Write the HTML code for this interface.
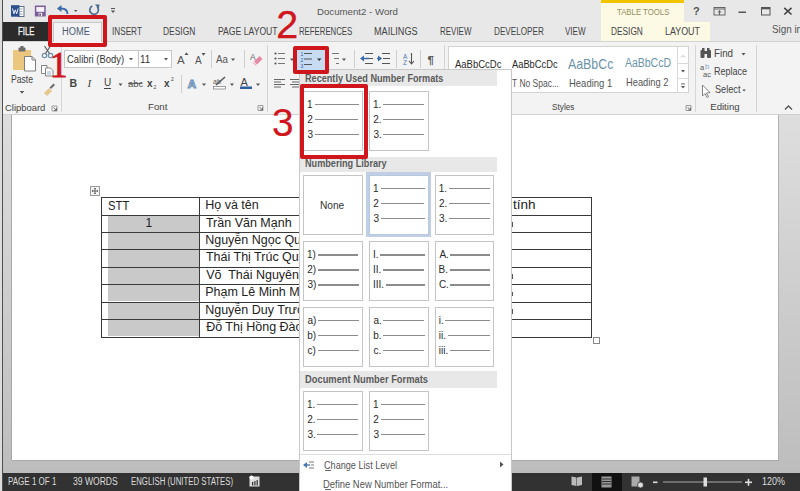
<!DOCTYPE html><html><head><meta charset="utf-8"><style>
html,body{margin:0;padding:0;width:800px;height:491px;overflow:hidden;background:#e8e8e8}
body{position:relative}
div,span,svg{position:absolute}
span{white-space:pre;line-height:normal}
</style></head><body>
<div style="left:0px;top:0px;width:800px;height:22px;background:#e8e8e8;"></div>
<div style="left:0px;top:22px;width:800px;height:19px;background:#e8e8e8;"></div>
<div style="left:0px;top:41px;width:800px;height:1px;background:#d2d2d2;"></div>
<div style="left:0px;top:42px;width:800px;height:73px;background:#f3f3f3;"></div>
<div style="left:0px;top:114px;width:800px;height:1px;background:#d0d0d0;"></div>
<div style="left:0px;top:115px;width:800px;height:358px;background:linear-gradient(#dedede,#bdbdbd);"></div>
<div style="left:11px;top:115px;width:1px;height:345px;background:#a8a8a8;"></div>
<div style="left:12px;top:115px;width:766px;height:344.5px;background:#ffffff;"></div>
<div style="left:778px;top:115px;width:1px;height:345px;background:#b0b0b0;"></div>
<div style="left:12px;top:459.5px;width:767px;height:1px;background:#aaaaaa;"></div>
<div style="left:0px;top:473px;width:800px;height:18px;background:#323232;"></div>
<div style="left:0px;top:0px;width:2px;height:491px;background:#dcdcdc;"></div>
<div style="left:1.6px;top:0px;width:1.7px;height:491px;background:#505050;"></div>
<div style="left:601px;top:0px;width:83px;height:22px;background:#fcf9e4;"></div>
<div style="left:601px;top:0px;width:83px;height:3px;background:#f2c400;"></div>
<div style="left:601px;top:22px;width:109px;height:19px;background:#fcf9e4;"></div>
<span style="left:616.54px;top:6.46px;font-size:9.5px;font-family:'Liberation Sans',sans-serif;color:#948c62;transform:scaleX(0.8190);transform-origin:0 0;">TABLE TOOLS</span>
<span style="left:610.84px;top:26.10px;font-size:10px;font-family:'Liberation Sans',sans-serif;color:#444;transform:scaleX(0.8311);transform-origin:0 0;">DESIGN</span>
<span style="left:665.29px;top:26.10px;font-size:10px;font-family:'Liberation Sans',sans-serif;color:#444;transform:scaleX(0.8889);transform-origin:0 0;">LAYOUT</span>
<div style="left:3px;top:22px;width:45px;height:19px;background:#2b2b2b;"></div>
<span style="left:17.88px;top:26.00px;font-size:10px;font-family:'Liberation Sans',sans-serif;color:#f4f4f4;transform:scaleX(0.7789);transform-origin:0 0;-webkit-text-stroke:0.3px #f4f4f4;">FILE</span>
<div style="left:53px;top:22px;width:49px;height:20px;background:#c8c8c8;"></div>
<div style="left:54px;top:23px;width:47px;height:19px;background:#f3f3f3;"></div>
<span style="left:62.26px;top:26.10px;font-size:10px;font-family:'Liberation Sans',sans-serif;color:#4b5b73;transform:scaleX(0.9271);transform-origin:0 0;">HOME</span>
<span style="left:112.26px;top:26.10px;font-size:10px;font-family:'Liberation Sans',sans-serif;color:#444;transform:scaleX(0.8192);transform-origin:0 0;">INSERT</span>
<span style="left:163.32px;top:26.10px;font-size:10px;font-family:'Liberation Sans',sans-serif;color:#444;transform:scaleX(0.8447);transform-origin:0 0;">DESIGN</span>
<span style="left:218.06px;top:26.10px;font-size:10px;font-family:'Liberation Sans',sans-serif;color:#444;transform:scaleX(0.8627);transform-origin:0 0;">PAGE LAYOUT</span>
<span style="left:298.88px;top:26.10px;font-size:10px;font-family:'Liberation Sans',sans-serif;color:#444;transform:scaleX(0.7787);transform-origin:0 0;">REFERENCES</span>
<span style="left:374.27px;top:26.10px;font-size:10px;font-family:'Liberation Sans',sans-serif;color:#444;transform:scaleX(0.9118);transform-origin:0 0;">MAILINGS</span>
<span style="left:439.76px;top:26.10px;font-size:10px;font-family:'Liberation Sans',sans-serif;color:#444;transform:scaleX(0.7979);transform-origin:0 0;">REVIEW</span>
<span style="left:493.55px;top:26.10px;font-size:10px;font-family:'Liberation Sans',sans-serif;color:#444;transform:scaleX(0.8154);transform-origin:0 0;">DEVELOPER</span>
<span style="left:565.46px;top:26.10px;font-size:10px;font-family:'Liberation Sans',sans-serif;color:#444;transform:scaleX(0.8055);transform-origin:0 0;">VIEW</span>
<span style="left:317.21px;top:5.98px;font-size:9.8px;font-family:'Liberation Sans',sans-serif;color:#555;transform:scaleX(0.9857);transform-origin:0 0;">Document2 - Word</span>
<span style="left:771.57px;top:23.72px;font-size:10.3px;font-family:'Liberation Sans',sans-serif;color:#555;transform:scaleX(0.9555);transform-origin:0 0;">Sign in</span>
<svg style="left:0;top:0" width="130" height="22" viewBox="0 0 130 22">
<rect x="18.5" y="6.5" width="5.5" height="10" fill="#fff" stroke="#5f6f86" stroke-width="1"/>
<line x1="19.5" y1="9" x2="22.5" y2="9" stroke="#7d8ca2" stroke-width="0.8"/>
<line x1="19.5" y1="11.5" x2="22.5" y2="11.5" stroke="#7d8ca2" stroke-width="0.8"/>
<line x1="19.5" y1="14" x2="22.5" y2="14" stroke="#7d8ca2" stroke-width="0.8"/>
<rect x="11" y="5.2" width="8.5" height="11.5" fill="#2b4f8c"/>
<path d="M12.5 8.5 L13.9 13.8 L15.3 9.8 L16.7 13.8 L18.1 8.5" fill="none" stroke="#e8eef8" stroke-width="1"/>
<rect x="35.6" y="6.3" width="9.4" height="9.4" fill="#f6f2f8" stroke="#7b5c98" stroke-width="1.5"/>
<rect x="35.6" y="11.8" width="9.4" height="4" fill="#7b5c98"/>
<rect x="38.6" y="12.8" width="3.6" height="3" fill="#f6f2f8"/>
<rect x="39.4" y="13.6" width="1.4" height="2" fill="#333"/>
<path d="M67.5 14 C67.5 9.5 65 8.5 61 8.5 L58.5 8.5" fill="none" stroke="#3d6aa8" stroke-width="1.8"/>
<path d="M57 8.5 L61.5 5 L61.5 12 Z" fill="#3d6aa8"/>
<path d="M74 10 L77.5 10 L75.75 12 Z" fill="#555"/>
<path d="M97.2 7 A4.3 4.3 0 1 1 92.3 6.1" fill="none" stroke="#4a6a90" stroke-width="1.7"/>
<path d="M95 4.5 L99.5 4.5 L98.8 9 Z" fill="#4a6a90"/>
<rect x="111" y="8" width="4" height="1" fill="#555"/>
<path d="M110.8 10.5 L115.2 10.5 L113 13 Z" fill="#555"/>
</svg>
<svg style="left:680px;top:0" width="120" height="22" viewBox="680 0 120 22">
<text x="693" y="15" font-family="Liberation Sans" font-weight="bold" font-size="11" fill="#555">?</text>
<rect x="714" y="7.5" width="11" height="7.5" fill="none" stroke="#666" stroke-width="1"/>
<line x1="714" y1="9" x2="725" y2="9" stroke="#666" stroke-width="1"/>
<path d="M719.5 10 L717.5 12.5 L721.5 12.5 Z" fill="#666"/>
<line x1="719.5" y1="12" x2="719.5" y2="15" stroke="#666" stroke-width="1"/>
<rect x="738.5" y="11.5" width="7.5" height="1.5" fill="#555"/>
<rect x="761.5" y="7.5" width="8.5" height="7.5" fill="none" stroke="#555" stroke-width="1"/>
<rect x="761.5" y="7.5" width="8.5" height="1.8" fill="#555"/>
<path d="M784.3 7.8 L791.5 14.5 M791.5 7.8 L784.3 14.5" stroke="#444" stroke-width="1.6"/>
</svg>
<div style="left:61px;top:45px;width:1px;height:67px;background:#d6d6d6;"></div>
<div style="left:267px;top:45px;width:1px;height:67px;background:#d6d6d6;"></div>
<div style="left:444.4px;top:45px;width:1px;height:67px;background:#d6d6d6;"></div>
<div style="left:694.8px;top:45px;width:1px;height:67px;background:#d6d6d6;"></div>
<div style="left:756.3px;top:45px;width:1px;height:67px;background:#d6d6d6;"></div>
<div style="left:210.6px;top:50px;width:1px;height:18px;background:#cfcfcf;"></div>
<div style="left:243.5px;top:50px;width:1px;height:18px;background:#cfcfcf;"></div>
<div style="left:181px;top:75px;width:1px;height:18px;background:#cfcfcf;"></div>
<div style="left:353.5px;top:50px;width:1px;height:18px;background:#cfcfcf;"></div>
<div style="left:395.5px;top:50px;width:1px;height:18px;background:#cfcfcf;"></div>
<div style="left:420.4px;top:50px;width:1px;height:18px;background:#cfcfcf;"></div>
<span style="left:5.36px;top:101.77px;font-size:9.6px;font-family:'Liberation Sans',sans-serif;color:#444;transform:scaleX(0.9813);transform-origin:0 0;">Clipboard</span>
<span style="left:147.64px;top:101.37px;font-size:9.6px;font-family:'Liberation Sans',sans-serif;color:#444;transform:scaleX(1.0109);transform-origin:0 0;">Font</span>
<span style="left:11.30px;top:73.04px;font-size:10.5px;font-family:'Liberation Sans',sans-serif;color:#444;transform:scaleX(0.8219);transform-origin:0 0;">Paste</span>
<span style="left:551.91px;top:101.37px;font-size:9.6px;font-family:'Liberation Sans',sans-serif;color:#444;transform:scaleX(0.8600);transform-origin:0 0;">Styles</span>
<span style="left:710.25px;top:101.37px;font-size:9.6px;font-family:'Liberation Sans',sans-serif;color:#444;">Editing</span>
<span style="left:714.41px;top:46.54px;font-size:10.5px;font-family:'Liberation Sans',sans-serif;color:#444;transform:scaleX(0.9312);transform-origin:0 0;">Find</span>
<span style="left:714.47px;top:64.94px;font-size:10.5px;font-family:'Liberation Sans',sans-serif;color:#444;transform:scaleX(0.8591);transform-origin:0 0;">Replace</span>
<span style="left:714.81px;top:83.14px;font-size:10.5px;font-family:'Liberation Sans',sans-serif;color:#444;transform:scaleX(0.8726);transform-origin:0 0;">Select</span>
<div style="left:64px;top:50px;width:75px;height:18px;box-sizing:border-box;border:1px solid #c6c6c6;background:#fff;"></div>
<div style="left:138px;top:50px;width:34px;height:18px;box-sizing:border-box;border:1px solid #c6c6c6;background:#fff;"></div>
<span style="left:66.55px;top:52.54px;font-size:10.5px;font-family:'Liberation Sans',sans-serif;color:#333;transform:scaleX(0.8967);transform-origin:0 0;">Calibri (Body)</span>
<span style="left:140.25px;top:52.54px;font-size:10.5px;font-family:'Liberation Sans',sans-serif;color:#333;transform:scaleX(0.9375);transform-origin:0 0;">11</span>
<svg style="left:0;top:42px" width="800" height="72" viewBox="0 42 800 72">
<!-- paste -->
<rect x="13" y="50" width="18" height="20" rx="1" fill="#ebc67e"/>
<rect x="18.5" y="47.5" width="7" height="4" rx="1" fill="#6d6d6d"/>
<rect x="20.5" y="46" width="3" height="2" fill="#6d6d6d"/>
<path d="M24.5 56.5 L32 56.5 L35.5 60 L35.5 71 L24.5 71 Z" fill="#fff" stroke="#7d7d7d" stroke-width="1"/>
<path d="M32 56.5 L32 60 L35.5 60" fill="none" stroke="#7d7d7d" stroke-width="1"/>
<path d="M20 91 L24 91 L22 93.5 Z" fill="#555"/>
<!-- scissors -->
<circle cx="44.5" cy="55.5" r="2.2" fill="none" stroke="#6f8fb0" stroke-width="1.2"/>
<circle cx="50.5" cy="55.5" r="2.2" fill="none" stroke="#6f8fb0" stroke-width="1.2"/>
<path d="M45.5 53.5 L50.5 46 M49.5 53.5 L44.5 46" stroke="#555" stroke-width="1.1"/>
<!-- copy -->
<path d="M41.5 65.5 L47 65.5 L47 73.5 L41.5 73.5 Z" fill="#fff" stroke="#777" stroke-width="0.9"/>
<path d="M45.5 68 L50.5 68 L53 70.5 L53 76 L45.5 76 Z" fill="#fff" stroke="#777" stroke-width="0.9"/>
<path d="M47 72 L51 72 M47 74 L51 74" stroke="#7aa0c0" stroke-width="0.8"/>
<!-- format painter -->
<path d="M44 93 L49 88 L52 91 L47 96 Z" fill="#e3c88f"/>
<path d="M49.5 87.5 L53.5 83.5 L55 85 L51 89 Z" fill="#6d6d6d"/>
<path d="M20 91 L24 91 L22 93.5 Z" fill="#555"/>
<!-- launchers -->
<path d="M52 106 L57 106 L57 111 L52 111 Z" fill="none" stroke="#888" stroke-width="0.8"/>
<path d="M53.5 107.5 L56.5 110.5 M56.5 108 L56.5 110.5 L54 110.5" fill="none" stroke="#666" stroke-width="0.9"/>
<path d="M258 105.5 L263 105.5 L263 110.5 L258 110.5 Z" fill="none" stroke="#888" stroke-width="0.8"/>
<path d="M259.5 107 L262.5 110 M262.5 107.5 L262.5 110 L260 110" fill="none" stroke="#666" stroke-width="0.9"/>
<path d="M686 105.5 L691 105.5 L691 110.5 L686 110.5 Z" fill="none" stroke="#888" stroke-width="0.8"/>
<path d="M687.5 107 L690.5 110 M690.5 107.5 L690.5 110 L688 110" fill="none" stroke="#666" stroke-width="0.9"/>
<!-- font dropdowns -->
<path d="M129 58 L133 58 L131 60.5 Z" fill="#555"/>
<path d="M164 58 L168 58 L166 60.5 Z" fill="#555"/>
<!-- grow/shrink -->
<text x="177" y="63.5" font-family="Liberation Sans" font-size="11.5" fill="#555">A</text>
<path d="M184.5 55 L188.5 55 L186.5 52.3 Z" fill="#555"/>
<text x="195" y="64" font-family="Liberation Sans" font-size="10" fill="#555">A</text>
<path d="M201.5 53 L205.5 53 L203.5 55.7 Z" fill="#555"/>
<text x="216" y="63" font-family="Liberation Sans" font-size="11" fill="#555" textLength="12" lengthAdjust="spacingAndGlyphs">Aa</text>
<path d="M231 58.5 L235 58.5 L233 61 Z" fill="#555"/>
<!-- clear formatting -->
<text x="250" y="60" font-family="Liberation Sans" font-size="8.5" fill="#666">A</text>
<path d="M254 61.5 L259.5 56 L262.5 59 L257 64.5 Z" fill="#e58aa5"/>
<path d="M253 62.5 L256 65.5" stroke="#e58aa5" stroke-width="1"/>
<!-- row2 font -->
<text x="69.5" y="87" font-family="Liberation Sans" font-weight="bold" font-size="10.5" fill="#444">B</text>
<text x="87.5" y="87" font-family="Liberation Serif" font-style="italic" font-size="11" fill="#444">I</text>
<text x="104" y="86" font-family="Liberation Sans" font-size="10" fill="#444">U</text>
<rect x="104" y="88" width="7" height="1" fill="#444"/>
<path d="M118.5 83.5 L122.5 83.5 L120.5 86 Z" fill="#555"/>
<text x="128" y="87" font-family="Liberation Sans" font-size="9.5" fill="#555">abc</text>
<rect x="128" y="83" width="14" height="0.9" fill="#555"/>
<text x="147" y="87" font-family="Liberation Sans" font-weight="bold" font-size="10" fill="#444">x</text>
<text x="153.5" y="89" font-family="Liberation Sans" font-size="5" fill="#444">2</text>
<text x="164" y="87" font-family="Liberation Sans" font-weight="bold" font-size="10" fill="#444">x</text>
<text x="171" y="81" font-family="Liberation Sans" font-size="5" fill="#444">2</text>
<text x="187.8" y="87.5" font-family="Liberation Sans" font-weight="bold" font-size="11.5" fill="#f4f8fc" stroke="#6b90b8" stroke-width="1.1">A</text>
<path d="M202 83.5 L206 83.5 L204 86 Z" fill="#555"/>
<text x="213" y="84" font-family="Liberation Sans" font-size="7" fill="#555">ab</text>
<path d="M216 85 L225 77" stroke="#555" stroke-width="1.5"/>
<rect x="213.5" y="86.5" width="12" height="2.5" fill="#fff" stroke="#888" stroke-width="0.8"/>
<path d="M230 83.5 L234 83.5 L232 86 Z" fill="#555"/>
<text x="240.5" y="86" font-family="Liberation Sans" font-size="11" fill="#444">A</text>
<rect x="240" y="86.5" width="12" height="2.5" fill="#2e5f9e"/>
<path d="M256 83.5 L260 83.5 L258 86 Z" fill="#555"/>
<!-- paragraph row1 -->
<g fill="#555">
<circle cx="275.5" cy="53.5" r="1.1"/><circle cx="275.5" cy="58.5" r="1.1"/><circle cx="275.5" cy="63.5" r="1.1"/>
</g>
<g stroke="#777" stroke-width="1">
<line x1="278" y1="53.5" x2="285" y2="53.5"/><line x1="278" y1="58.5" x2="285" y2="58.5"/><line x1="278" y1="63.5" x2="285" y2="63.5"/>
</g>
<path d="M290 58.5 L294 58.5 L292 61 Z" fill="#555"/>
<!-- multilevel -->
<g stroke="#777" stroke-width="1">
<line x1="332" y1="53.5" x2="339" y2="53.5"/><line x1="334" y1="58.5" x2="339" y2="58.5"/><line x1="336" y1="63.5" x2="339" y2="63.5"/>
</g>
<path d="M342 58.5 L346 58.5 L344 61 Z" fill="#555"/>
<!-- indents -->
<g stroke="#555" stroke-width="1">
<line x1="365" y1="53.5" x2="373" y2="53.5"/><line x1="366" y1="58.5" x2="373" y2="58.5"/><line x1="365" y1="63.5" x2="373" y2="63.5"/>
<line x1="382" y1="53.5" x2="390" y2="53.5"/><line x1="383" y1="58.5" x2="390" y2="58.5"/><line x1="382" y1="63.5" x2="390" y2="63.5"/>
</g>
<path d="M360 58.5 L364 55.5 L364 61.5 Z" fill="#3d6aa8"/><line x1="363" y1="58.5" x2="369" y2="58.5" stroke="#3d6aa8" stroke-width="1.5"/>
<path d="M382 58.5 L378 55.5 L378 61.5 Z" fill="#3d6aa8"/><line x1="377" y1="58.5" x2="381" y2="58.5" stroke="#3d6aa8" stroke-width="1.5"/>
<!-- sort -->
<text x="403" y="59" font-family="Liberation Sans" font-size="6.5" fill="#4d7ab0">A</text>
<text x="403" y="65" font-family="Liberation Sans" font-size="6.5" fill="#4d7ab0">Z</text>
<path d="M411.5 53 L411.5 64 M409 61 L411.5 64 L414 61" fill="none" stroke="#555" stroke-width="1.1"/>
<!-- pilcrow -->
<text x="427.5" y="64" font-family="Liberation Sans" font-weight="bold" font-size="11.5" fill="#555">&#182;</text>
<!-- align row2 -->
<g stroke="#666" stroke-width="1">
<line x1="274" y1="79.5" x2="285" y2="79.5"/><line x1="274" y1="82" x2="281" y2="82"/><line x1="274" y1="84.5" x2="285" y2="84.5"/><line x1="274" y1="87" x2="281" y2="87"/>
<line x1="290" y1="79.5" x2="299" y2="79.5"/><line x1="292" y1="82" x2="299" y2="82"/><line x1="290" y1="84.5" x2="299" y2="84.5"/><line x1="292" y1="87" x2="299" y2="87"/>
</g>
<!-- editing icons -->
<g fill="#555">
<rect x="700.5" y="50" width="4" height="8" rx="1"/><rect x="707" y="50" width="4" height="8" rx="1"/>
<rect x="702" y="48" width="2.5" height="3"/><rect x="707" y="48" width="2.5" height="3"/><rect x="703.5" y="51" width="4" height="3"/>
</g>
<path d="M741.5 53 L745.5 53 L743.5 55.5 Z" fill="#555"/>
<text x="700" y="70" font-family="Liberation Sans" font-size="7.5" fill="#555">a</text>
<text x="705" y="69" font-family="Liberation Sans" font-size="7.5" fill="#8aa8c8">b</text>
<text x="703" y="76.5" font-family="Liberation Sans" font-size="7.5" fill="#555">ac</text>
<path d="M702.5 85 L702.5 96 L705 93.5 L707 97.5 L708.5 96.8 L706.5 93 L710 92.5 Z" fill="#fff" stroke="#777" stroke-width="0.9"/>
<path d="M742.3 89.5 L745.8 89.5 L744.05 91.5 Z" fill="#555"/>
<path d="M785 109.5 L788.5 106 L792 109.5" fill="none" stroke="#555" stroke-width="1.4"/>
</svg>
<div style="left:448px;top:46px;width:241px;height:47px;box-sizing:border-box;border:1px solid #d2d2d2;background:#fff;"></div>
<div style="left:677px;top:46px;width:1px;height:47px;background:#d9d9d9;"></div>
<div style="left:677px;top:62.5px;width:12px;height:1px;background:#d9d9d9;"></div>
<div style="left:677px;top:78px;width:12px;height:1px;background:#d9d9d9;"></div>
<svg style="left:677px;top:46px" width="12" height="47" viewBox="677 46 12 47">
<path d="M681 57.5 L683 55.5 L685 57.5" fill="none" stroke="#bbb" stroke-width="1"/>
<path d="M681 70 L685 70 L683 72.5 Z" fill="#555"/>
<rect x="681" y="83.5" width="4" height="0.9" fill="#555"/>
<path d="M681 86 L685 86 L683 88.5 Z" fill="#555"/>
</svg>
<span style="left:454.60px;top:57.88px;font-size:11px;font-family:'Liberation Sans',sans-serif;color:#2a2a2a;transform:scaleX(0.8636);transform-origin:0 0;">AaBbCcDc</span>
<span style="left:511.70px;top:57.88px;font-size:11px;font-family:'Liberation Sans',sans-serif;color:#2a2a2a;transform:scaleX(0.8467);transform-origin:0 0;">AaBbCcDc</span>
<span style="left:567.96px;top:55.40px;font-size:15px;font-family:'Liberation Sans',sans-serif;color:#6a94aa;transform:scaleX(0.8242);transform-origin:0 0;">AaBbCc</span>
<span style="left:624.50px;top:56.30px;font-size:12.5px;font-family:'Liberation Sans',sans-serif;color:#6a94aa;transform:scaleX(0.8379);transform-origin:0 0;">AaBbCcD</span>
<span style="left:511.84px;top:76.54px;font-size:10.5px;font-family:'Liberation Sans',sans-serif;color:#555;transform:scaleX(0.8070);transform-origin:0 0;">T No Spac...</span>
<span style="left:569.23px;top:76.54px;font-size:10.5px;font-family:'Liberation Sans',sans-serif;color:#555;transform:scaleX(0.9023);transform-origin:0 0;">Heading 1</span>
<span style="left:625.95px;top:76.34px;font-size:10.5px;font-family:'Liberation Sans',sans-serif;color:#555;transform:scaleX(0.8882);transform-origin:0 0;">Heading 2</span>
<div style="left:108px;top:215.4px;width:91px;height:16.400000000000006px;background:#c9c9c9;"></div>
<div style="left:108px;top:232.8px;width:91px;height:16.399999999999977px;background:#c9c9c9;"></div>
<div style="left:108px;top:250.2px;width:91px;height:16.400000000000034px;background:#c9c9c9;"></div>
<div style="left:108px;top:267.6px;width:91px;height:16.399999999999977px;background:#c9c9c9;"></div>
<div style="left:108px;top:285.0px;width:91px;height:16.399999999999977px;background:#c9c9c9;"></div>
<div style="left:108px;top:302.4px;width:91px;height:16.400000000000034px;background:#c9c9c9;"></div>
<div style="left:108px;top:319.8px;width:91px;height:16.5px;background:#c9c9c9;"></div>
<div style="left:101px;top:197.0px;width:491px;height:1.2px;background:#3a3a3a;"></div>
<div style="left:101px;top:214.5px;width:491px;height:1.2px;background:#3a3a3a;"></div>
<div style="left:101px;top:232.0px;width:491px;height:1.2px;background:#3a3a3a;"></div>
<div style="left:101px;top:249.0px;width:491px;height:1.2px;background:#3a3a3a;"></div>
<div style="left:101px;top:266.5px;width:491px;height:1.2px;background:#3a3a3a;"></div>
<div style="left:101px;top:284.0px;width:491px;height:1.2px;background:#3a3a3a;"></div>
<div style="left:101px;top:301.5px;width:491px;height:1.2px;background:#3a3a3a;"></div>
<div style="left:101px;top:319.0px;width:491px;height:1.2px;background:#3a3a3a;"></div>
<div style="left:101px;top:336.5px;width:491px;height:1.2px;background:#3a3a3a;"></div>
<div style="left:101px;top:197px;width:1.2px;height:140.5px;background:#3a3a3a;"></div>
<div style="left:198.8px;top:197px;width:1.2px;height:140.5px;background:#3a3a3a;"></div>
<div style="left:591.3px;top:197px;width:1.2px;height:140.5px;background:#3a3a3a;"></div>
<span style="left:107.78px;top:198.96px;font-size:12px;font-family:'Liberation Sans',sans-serif;color:#222;transform:scaleX(0.9382);transform-origin:0 0;">STT</span>
<span style="left:145.60px;top:215.76px;font-size:12px;font-family:'Liberation Sans',sans-serif;color:#222;">1</span>
<span style="left:205.20px;top:198.10px;font-size:12.5px;font-family:'Liberation Sans',sans-serif;color:#222;">Họ và tên</span>
<span style="left:205.95px;top:215.50px;font-size:12.5px;font-family:'Liberation Sans',sans-serif;color:#222;">Trần Văn Mạnh</span>
<span style="left:205.20px;top:232.90px;font-size:12.5px;font-family:'Liberation Sans',sans-serif;color:#222;">Nguyễn Ngọc Quỳnh</span>
<span style="left:205.95px;top:250.30px;font-size:12.5px;font-family:'Liberation Sans',sans-serif;color:#222;">Thái Thị Trúc Quỳnh</span>
<span style="left:206.15px;top:267.70px;font-size:12.5px;font-family:'Liberation Sans',sans-serif;color:#222;">Võ  Thái Nguyên</span>
<span style="left:205.20px;top:285.10px;font-size:12.5px;font-family:'Liberation Sans',sans-serif;color:#222;">Phạm Lê Minh Mai</span>
<span style="left:205.20px;top:302.50px;font-size:12.5px;font-family:'Liberation Sans',sans-serif;color:#222;">Nguyễn Duy Trường</span>
<span style="left:206.15px;top:319.90px;font-size:12.5px;font-family:'Liberation Sans',sans-serif;color:#222;">Đỗ Thị Hồng Đào</span>
<span style="left:512.58px;top:198.30px;font-size:12.5px;font-family:'Liberation Sans',sans-serif;color:#222;transform:scaleX(1.0831);transform-origin:0 0;">tính</span>
<div style="left:512.3px;top:222.20000000000002px;width:1px;height:4.5px;background:#555;"></div>
<div style="left:512.3px;top:274.40000000000003px;width:1px;height:4.5px;background:#555;"></div>
<div style="left:512.3px;top:291.8px;width:1px;height:4.5px;background:#555;"></div>
<div style="left:512.3px;top:309.2px;width:1px;height:4.5px;background:#555;"></div>
<svg style="left:88px;top:184px" width="14" height="14" viewBox="88 184 14 14">
<rect x="90.5" y="186.5" width="9" height="9" fill="#f4f4f4" stroke="#999" stroke-width="1"/>
<path d="M95 188 L95 194 M92 191 L98 191" stroke="#555" stroke-width="0.9"/>
<path d="M94 189 L95 188 L96 189 M94 193 L95 194 L96 193 M93 190 L92 191 L93 192 M97 190 L98 191 L97 192" fill="none" stroke="#555" stroke-width="0.7"/>
</svg>
<div style="left:593px;top:337px;width:7px;height:7px;box-sizing:border-box;border:1px solid #888;background:#fff;"></div>
<div style="left:299px;top:68.5px;width:213px;height:430px;box-sizing:border-box;border:1px solid #c8c8c8;background:#fff;"></div>
<div style="left:300px;top:69.5px;width:197px;height:16px;background:#e8e8e8;"></div>
<div style="left:300px;top:156.5px;width:197px;height:15.5px;background:#e8e8e8;"></div>
<div style="left:300px;top:370.5px;width:197px;height:17px;background:#e8e8e8;"></div>
<span style="left:305.01px;top:73.40px;font-size:10px;font-family:'Liberation Sans',sans-serif;color:#5a5a5a;font-weight:bold;transform:scaleX(0.9120);transform-origin:0 0;">Recently Used Number Formats</span>
<span style="left:304.71px;top:158.00px;font-size:10px;font-family:'Liberation Sans',sans-serif;color:#5a5a5a;font-weight:bold;transform:scaleX(0.9127);transform-origin:0 0;">Numbering Library</span>
<span style="left:304.69px;top:373.70px;font-size:10px;font-family:'Liberation Sans',sans-serif;color:#5a5a5a;font-weight:bold;transform:scaleX(0.9338);transform-origin:0 0;">Document Number Formats</span>
<div style="left:303.2px;top:91px;width:59.5px;height:60px;box-sizing:border-box;border:1px solid #c4c4c4;background:#fff;"></div>
<span style="left:307.05px;top:98.60px;font-size:10px;font-family:'Liberation Sans',sans-serif;color:#2a2a2a;">1</span>
<div style="left:314.5px;top:103.8px;width:44.0px;height:1.4px;background:#8c8c8c;"></div>
<span style="left:307.30px;top:113.60px;font-size:10px;font-family:'Liberation Sans',sans-serif;color:#2a2a2a;">2</span>
<div style="left:314.5px;top:118.8px;width:43.5px;height:1.4px;background:#8c8c8c;"></div>
<span style="left:307.45px;top:128.60px;font-size:10px;font-family:'Liberation Sans',sans-serif;color:#2a2a2a;">3</span>
<div style="left:315.0px;top:133.8px;width:43.5px;height:1.4px;background:#8c8c8c;"></div>
<div style="left:369.2px;top:91px;width:59.5px;height:60px;box-sizing:border-box;border:1px solid #c4c4c4;background:#fff;"></div>
<span style="left:373.05px;top:98.60px;font-size:10px;font-family:'Liberation Sans',sans-serif;color:#2a2a2a;">1.</span>
<div style="left:382.5px;top:103.8px;width:41.5px;height:1.4px;background:#8c8c8c;"></div>
<span style="left:373.30px;top:113.60px;font-size:10px;font-family:'Liberation Sans',sans-serif;color:#2a2a2a;">2.</span>
<div style="left:383.0px;top:118.8px;width:41.0px;height:1.4px;background:#8c8c8c;"></div>
<span style="left:373.45px;top:128.60px;font-size:10px;font-family:'Liberation Sans',sans-serif;color:#2a2a2a;">3.</span>
<div style="left:383.0px;top:133.8px;width:41.0px;height:1.4px;background:#8c8c8c;"></div>
<div style="left:366.2px;top:172.3px;width:64.6px;height:64.4px;background:#c0cfe3;"></div>
<div style="left:368.6px;top:174.6px;width:59.8px;height:59.8px;background:#a3b7d3;"></div>
<div style="left:369.2px;top:175.2px;width:59.5px;height:60px;box-sizing:border-box;border:1px solid #b7c8e0;background:#fff;"></div>
<span style="left:373.05px;top:182.80px;font-size:10px;font-family:'Liberation Sans',sans-serif;color:#2a2a2a;">1</span>
<div style="left:380.5px;top:188.0px;width:44.0px;height:1.4px;background:#8c8c8c;"></div>
<span style="left:373.30px;top:197.80px;font-size:10px;font-family:'Liberation Sans',sans-serif;color:#2a2a2a;">2</span>
<div style="left:380.5px;top:203.0px;width:43.5px;height:1.4px;background:#8c8c8c;"></div>
<span style="left:373.45px;top:212.80px;font-size:10px;font-family:'Liberation Sans',sans-serif;color:#2a2a2a;">3</span>
<div style="left:381.0px;top:218.0px;width:43.5px;height:1.4px;background:#8c8c8c;"></div>
<div style="left:303.2px;top:175.2px;width:59.5px;height:60px;box-sizing:border-box;border:1px solid #c4c4c4;background:#fff;"></div>
<span style="left:320.08px;top:199.44px;font-size:10.5px;font-family:'Liberation Sans',sans-serif;color:#333;transform:scaleX(0.9664);transform-origin:0 0;">None</span>
<div style="left:434.8px;top:175.2px;width:59.5px;height:60px;box-sizing:border-box;border:1px solid #c4c4c4;background:#fff;"></div>
<span style="left:438.65px;top:182.80px;font-size:10px;font-family:'Liberation Sans',sans-serif;color:#2a2a2a;">1.</span>
<div style="left:448.5px;top:188.0px;width:41.5px;height:1.4px;background:#8c8c8c;"></div>
<span style="left:438.90px;top:197.80px;font-size:10px;font-family:'Liberation Sans',sans-serif;color:#2a2a2a;">2.</span>
<div style="left:448.5px;top:203.0px;width:41.0px;height:1.4px;background:#8c8c8c;"></div>
<span style="left:439.05px;top:212.80px;font-size:10px;font-family:'Liberation Sans',sans-serif;color:#2a2a2a;">3.</span>
<div style="left:448.5px;top:218.0px;width:41.0px;height:1.4px;background:#8c8c8c;"></div>
<div style="left:303.2px;top:241.4px;width:59.5px;height:60px;box-sizing:border-box;border:1px solid #c4c4c4;background:#fff;"></div>
<span style="left:307.05px;top:249.00px;font-size:10px;font-family:'Liberation Sans',sans-serif;color:#2a2a2a;">1)</span>
<div style="left:317.5px;top:254.20000000000002px;width:40.5px;height:1.4px;background:#8c8c8c;"></div>
<span style="left:307.30px;top:264.00px;font-size:10px;font-family:'Liberation Sans',sans-serif;color:#2a2a2a;">2)</span>
<div style="left:318.0px;top:269.20000000000005px;width:40.5px;height:1.4px;background:#8c8c8c;"></div>
<span style="left:307.45px;top:279.00px;font-size:10px;font-family:'Liberation Sans',sans-serif;color:#2a2a2a;">3)</span>
<div style="left:318.0px;top:284.20000000000005px;width:40.5px;height:1.4px;background:#8c8c8c;"></div>
<div style="left:369.2px;top:241.4px;width:59.5px;height:60px;box-sizing:border-box;border:1px solid #c4c4c4;background:#fff;"></div>
<span style="left:372.90px;top:249.00px;font-size:10px;font-family:'Liberation Sans',sans-serif;color:#2a2a2a;">I.</span>
<div style="left:380.0px;top:254.20000000000002px;width:44.5px;height:1.4px;background:#8c8c8c;"></div>
<span style="left:372.90px;top:264.00px;font-size:10px;font-family:'Liberation Sans',sans-serif;color:#2a2a2a;">II.</span>
<div style="left:382.5px;top:269.20000000000005px;width:41.5px;height:1.4px;background:#8c8c8c;"></div>
<span style="left:372.90px;top:279.00px;font-size:10px;font-family:'Liberation Sans',sans-serif;color:#2a2a2a;">III.</span>
<div style="left:385.5px;top:284.20000000000005px;width:39.0px;height:1.4px;background:#8c8c8c;"></div>
<div style="left:434.8px;top:241.4px;width:59.5px;height:60px;box-sizing:border-box;border:1px solid #c4c4c4;background:#fff;"></div>
<span style="left:439.40px;top:249.00px;font-size:10px;font-family:'Liberation Sans',sans-serif;color:#2a2a2a;">A.</span>
<div style="left:450.0px;top:254.20000000000002px;width:39.5px;height:1.4px;background:#8c8c8c;"></div>
<span style="left:438.60px;top:264.00px;font-size:10px;font-family:'Liberation Sans',sans-serif;color:#2a2a2a;">B.</span>
<div style="left:449.5px;top:269.20000000000005px;width:40.5px;height:1.4px;background:#8c8c8c;"></div>
<span style="left:438.90px;top:279.00px;font-size:10px;font-family:'Liberation Sans',sans-serif;color:#2a2a2a;">C.</span>
<div style="left:450.0px;top:284.20000000000005px;width:39.5px;height:1.4px;background:#8c8c8c;"></div>
<div style="left:303.2px;top:307.2px;width:59.5px;height:60px;box-sizing:border-box;border:1px solid #c4c4c4;background:#fff;"></div>
<span style="left:307.40px;top:314.80px;font-size:10px;font-family:'Liberation Sans',sans-serif;color:#2a2a2a;">a)</span>
<div style="left:318.0px;top:320.0px;width:40.5px;height:1.4px;background:#8c8c8c;"></div>
<span style="left:307.15px;top:329.80px;font-size:10px;font-family:'Liberation Sans',sans-serif;color:#2a2a2a;">b)</span>
<div style="left:317.5px;top:335.0px;width:40.5px;height:1.4px;background:#8c8c8c;"></div>
<span style="left:307.40px;top:344.80px;font-size:10px;font-family:'Liberation Sans',sans-serif;color:#2a2a2a;">c)</span>
<div style="left:317.5px;top:350.0px;width:41.0px;height:1.4px;background:#8c8c8c;"></div>
<div style="left:369.2px;top:307.2px;width:59.5px;height:60px;box-sizing:border-box;border:1px solid #c4c4c4;background:#fff;"></div>
<span style="left:373.40px;top:314.80px;font-size:10px;font-family:'Liberation Sans',sans-serif;color:#2a2a2a;">a.</span>
<div style="left:383.0px;top:320.0px;width:41.0px;height:1.4px;background:#8c8c8c;"></div>
<span style="left:373.15px;top:329.80px;font-size:10px;font-family:'Liberation Sans',sans-serif;color:#2a2a2a;">b.</span>
<div style="left:383.0px;top:335.0px;width:41.5px;height:1.4px;background:#8c8c8c;"></div>
<span style="left:373.40px;top:344.80px;font-size:10px;font-family:'Liberation Sans',sans-serif;color:#2a2a2a;">c.</span>
<div style="left:382.5px;top:350.0px;width:41.5px;height:1.4px;background:#8c8c8c;"></div>
<div style="left:434.8px;top:307.2px;width:59.5px;height:60px;box-sizing:border-box;border:1px solid #c4c4c4;background:#fff;"></div>
<span style="left:438.75px;top:314.80px;font-size:10px;font-family:'Liberation Sans',sans-serif;color:#2a2a2a;">i.</span>
<div style="left:445.0px;top:320.0px;width:45.0px;height:1.4px;background:#8c8c8c;"></div>
<span style="left:438.75px;top:329.80px;font-size:10px;font-family:'Liberation Sans',sans-serif;color:#2a2a2a;">ii.</span>
<div style="left:447.5px;top:335.0px;width:42.5px;height:1.4px;background:#8c8c8c;"></div>
<span style="left:438.75px;top:344.80px;font-size:10px;font-family:'Liberation Sans',sans-serif;color:#2a2a2a;">iii.</span>
<div style="left:449.5px;top:350.0px;width:40.5px;height:1.4px;background:#8c8c8c;"></div>
<div style="left:303.2px;top:391.2px;width:59.5px;height:60px;box-sizing:border-box;border:1px solid #c4c4c4;background:#fff;"></div>
<span style="left:307.05px;top:398.80px;font-size:10px;font-family:'Liberation Sans',sans-serif;color:#2a2a2a;">1.</span>
<div style="left:316.5px;top:404.0px;width:41.5px;height:1.4px;background:#8c8c8c;"></div>
<span style="left:307.30px;top:413.80px;font-size:10px;font-family:'Liberation Sans',sans-serif;color:#2a2a2a;">2.</span>
<div style="left:317.0px;top:419.0px;width:41.0px;height:1.4px;background:#8c8c8c;"></div>
<span style="left:307.45px;top:428.80px;font-size:10px;font-family:'Liberation Sans',sans-serif;color:#2a2a2a;">3.</span>
<div style="left:317.0px;top:434.0px;width:41.0px;height:1.4px;background:#8c8c8c;"></div>
<div style="left:369.2px;top:391.2px;width:59.5px;height:60px;box-sizing:border-box;border:1px solid #c4c4c4;background:#fff;"></div>
<span style="left:373.05px;top:398.80px;font-size:10px;font-family:'Liberation Sans',sans-serif;color:#2a2a2a;">1</span>
<div style="left:380.5px;top:404.0px;width:44.0px;height:1.4px;background:#8c8c8c;"></div>
<span style="left:373.30px;top:413.80px;font-size:10px;font-family:'Liberation Sans',sans-serif;color:#2a2a2a;">2</span>
<div style="left:380.5px;top:419.0px;width:43.5px;height:1.4px;background:#8c8c8c;"></div>
<span style="left:373.45px;top:428.80px;font-size:10px;font-family:'Liberation Sans',sans-serif;color:#2a2a2a;">3</span>
<div style="left:381.0px;top:434.0px;width:43.5px;height:1.4px;background:#8c8c8c;"></div>
<div style="left:300px;top:454.3px;width:211px;height:1px;background:#dedede;"></div>
<span style="left:323.57px;top:458.94px;font-size:10.5px;font-family:'Liberation Sans',sans-serif;color:#555;transform:scaleX(0.8685);transform-origin:0 0;">Change List Level</span>
<div style="left:324.5px;top:470px;width:6.5px;height:0.9px;background:#666;"></div>
<div style="left:324.5px;top:488.6px;width:6.5px;height:0.9px;background:#666;"></div>
<span style="left:323.24px;top:477.54px;font-size:10.5px;font-family:'Liberation Sans',sans-serif;color:#555;transform:scaleX(0.8972);transform-origin:0 0;">Define New Number Format...</span>
<svg style="left:300px;top:456px" width="212" height="35" viewBox="300 456 212 35">
<path d="M500 461.5 L503.5 464.5 L500 467.5 Z" fill="#555"/>
<path d="M303 465 L307 462 L307 468 Z" fill="#4a78b0"/>
<line x1="306" y1="465" x2="310" y2="465" stroke="#4a78b0" stroke-width="1.4"/>
<g stroke="#666" stroke-width="0.9"><line x1="309" y1="462" x2="314" y2="462"/><line x1="311" y1="465" x2="314" y2="465"/><line x1="309" y1="468" x2="314" y2="468"/></g>
</svg>
<div style="left:48.4px;top:15.2px;width:58.2px;height:31.8px;box-sizing:border-box;border:4px solid #d0161d;background:transparent;border-radius:2px;"></div>
<div style="left:293px;top:45.6px;width:36px;height:28.2px;box-sizing:border-box;border:4px solid #d0161d;background:transparent;border-radius:2px;"></div>
<div style="left:297px;top:49.6px;width:28px;height:20.2px;background:#c6daf2;"></div>
<svg style="left:297px;top:49px" width="28" height="21" viewBox="297 49 28 21">
<text x="300.5" y="55.5" font-family="Liberation Sans" font-size="5" fill="#2b5f9e">1</text>
<text x="300.5" y="61.5" font-family="Liberation Sans" font-size="5" fill="#2b5f9e">2</text>
<text x="300.5" y="67.5" font-family="Liberation Sans" font-size="5" fill="#2b5f9e">3</text>
<g stroke="#555" stroke-width="1"><line x1="304" y1="53.5" x2="312" y2="53.5"/><line x1="304" y1="59" x2="312" y2="59"/><line x1="304" y1="64.5" x2="312" y2="64.5"/></g>
<path d="M317 58.5 L321.5 58.5 L319.25 61 Z" fill="#333"/>
</svg>
<div style="left:299.7px;top:84.4px;width:68.8px;height:74.3px;box-sizing:border-box;border:4px solid #d0161d;background:transparent;border-radius:2px;"></div>
<span style="left:49.56px;top:43.60px;font-size:35.5px;font-family:'Liberation Serif',serif;color:#d0161d;transform:scaleX(0.9801);transform-origin:0 0;-webkit-text-stroke:0.9px #d0161d;">1</span>
<span style="left:276.26px;top:2.46px;font-size:39.5px;font-family:'Liberation Sans',sans-serif;color:#d0161d;-webkit-text-stroke:0.35px #d0161d;">2</span>
<span style="left:272.13px;top:99.66px;font-size:39.5px;font-family:'Liberation Sans',sans-serif;color:#d0161d;transform:scaleX(0.9813);transform-origin:0 0;-webkit-text-stroke:0.2px #d0161d;">3</span>
<span style="left:7.96px;top:475.80px;font-size:10px;font-family:'Liberation Sans',sans-serif;color:#dcdcdc;transform:scaleX(0.8014);transform-origin:0 0;">PAGE 1 OF 1</span>
<span style="left:72.70px;top:475.80px;font-size:10px;font-family:'Liberation Sans',sans-serif;color:#dcdcdc;transform:scaleX(0.8560);transform-origin:0 0;">39 WORDS</span>
<span style="left:130.68px;top:475.80px;font-size:10px;font-family:'Liberation Sans',sans-serif;color:#dcdcdc;transform:scaleX(0.7808);transform-origin:0 0;">ENGLISH (UNITED STATES)</span>
<div style="left:591.5px;top:473px;width:30px;height:18px;background:#111;"></div>
<svg style="left:240px;top:473px" width="560" height="18" viewBox="240 473 560 18">
<rect x="249.5" y="476.5" width="10" height="10" fill="#ddd"/>
<circle cx="251.5" cy="477.5" r="2" fill="#fff"/>
<g fill="#2e2e2e"><rect x="252" y="482" width="1.2" height="3.5"/><rect x="254.3" y="481" width="1.2" height="4.5"/><rect x="256.6" y="480" width="1.2" height="5.5"/></g>
<path d="M571.5 476.5 L576.5 477.5 L576.5 486 L571.5 485 Z M582 476.5 L577 477.5 L577 486 L582 485 Z" fill="#bbb"/>
<rect x="601.5" y="476.5" width="10" height="11" fill="#999"/>
<g stroke="#111" stroke-width="0.8"><line x1="602" y1="479" x2="611" y2="479"/><line x1="602" y1="481.5" x2="611" y2="481.5"/><line x1="602" y1="484" x2="611" y2="484"/></g>
<rect x="631.5" y="476.5" width="8" height="10" fill="#aaa"/>
<circle cx="640.5" cy="485" r="3" fill="#ddd" stroke="#2e2e2e" stroke-width="0.8"/>
<rect x="653" y="481.5" width="4.5" height="1.6" fill="#ddd"/>
<rect x="663" y="481.5" width="79" height="1" fill="#aaa"/>
<rect x="703.5" y="477.5" width="3.5" height="9" fill="#ddd"/>
<rect x="745" y="481.5" width="7" height="1.6" fill="#ddd"/>
<rect x="747.7" y="478.8" width="1.6" height="7" fill="#ddd"/>
</svg>
<span style="left:762.33px;top:476.30px;font-size:10px;font-family:'Liberation Sans',sans-serif;color:#dcdcdc;transform:scaleX(0.8980);transform-origin:0 0;">120%</span>
</body></html>
